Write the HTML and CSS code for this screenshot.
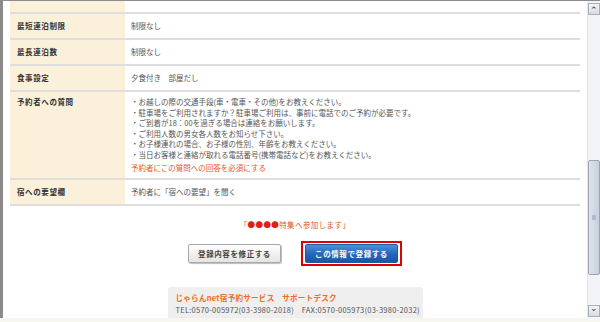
FILE: index.html
```html
<!DOCTYPE html>
<html lang="ja">
<head>
    <meta charset="UTF-8">
    <title>登録内容の確認</title>
    <link rel="stylesheet" href="styles.css">
</head>
<body>
    <div class="window">
        <div class="page">
            <div class="content">
                <table class="info">
                    <tr class="cut">
                        <th>最低連泊日数</th>
                        <td></td>
                    </tr>
                    <tr>
                        <th>最短連泊制限</th>
                        <td>制限なし</td>
                    </tr>
                    <tr>
                        <th>最長連泊数</th>
                        <td>制限なし</td>
                    </tr>
                    <tr>
                        <th>食事設定</th>
                        <td>夕食付き　部屋だし</td>
                    </tr>
                    <tr class="question">
                        <th>予約者への質問</th>
                        <td>
                            <p>・お越しの際の交通手段(車・電車・その他)をお教えください。</p>
                            <p>・駐車場をご利用されますか？駐車場ご利用は、事前に電話でのご予約が必要です。</p>
                            <p>・ご到着が18：00を過ぎる場合は連絡をお願いします。</p>
                            <p>・ご利用人数の男女各人数をお知らせ下さい。</p>
                            <p>・お子様連れの場合、お子様の性別、年齢をお教えください。</p>
                            <p>・当日お客様と連絡が取れる電話番号(携帯電話など)をお教えください。</p>
                            <p class="required">予約者にこの質問への回答を必須にする</p>
                        </td>
                    </tr>
                    <tr>
                        <th>宿への要望欄</th>
                        <td>予約者に「宿への要望」を聞く</td>
                    </tr>
                </table>

                <p class="campaign">「<span class="dot">●</span><span class="dot">●</span><span class="dot">●</span><span class="dot">●</span>特集へ参加します」</p>

                <div class="actions">
                    <button class="btn btn-back">登録内容を修正する</button>
                    <span class="focus">
                        <button class="btn btn-submit">この情報で登録する</button>
                    </span>
                </div>

                <div class="support">
                    <h2>じゃらんnet宿予約サービス　サポートデスク</h2>
                    <p>TEL:0570-005972(03-3980-2018)　FAX:0570-005973(03-3980-2032)</p>
                    <p>受付時間：年中無休　午前9時～午後6時(平日)</p>
                </div>
            </div>
        </div>
        <div class="scrollbar">
            <div class="arrow">&#8963;</div>
            <div class="track">
                <div class="thumb"><span class="grip"></span></div>
            </div>
            <div class="arrow">&#8964;</div>
        </div>
    </div>
    <div class="statusbar"></div>
</body>
</html>
```

FILE: styles.css
```css
    html, body {
        margin: 0;
        height: 100%;
        overflow: hidden;
    }

    body {
        font-family: "Noto Sans CJK JP", "Liberation Sans", sans-serif;
        font-size: 7.5px;
        color: #444;
        background-color: #fff;
        display: flex;
        flex-direction: column;
    }

    .window {
        flex: 1;
        display: flex;
        min-height: 0;
        border-top: 1px solid #8c8c8c;
    }

    .page {
        flex: 1;
        border-left: 3px solid #8a8a8a;
        overflow: hidden;
    }

    .content {
        width: 570px;
        margin: -13px 0 0 7px;
    }

    .info {
        width: 100%;
        border-collapse: collapse;
    }

    .info th,
    .info td {
        height: 24px;
        padding: 0 6px;
        border-bottom: 2px solid #dedede;
        text-align: left;
        vertical-align: middle;
        line-height: 10px;
    }

    .info th {
        width: 102px;
        padding-left: 7px;
        background-color: #fbf1da;
        color: #333;
        font-weight: bold;
        letter-spacing: 0.6px;
    }

    .info td {
        color: #555;
    }

    .info .cut th,
    .info .cut td {
        height: 21px;
        padding-top: 3px;
        vertical-align: top;
    }

    .question th,
    .question td {
        height: auto;
        vertical-align: top;
        padding-top: 5px;
        padding-bottom: 4px;
    }

    .question p {
        margin: 0;
        line-height: 10.5px;
        white-space: nowrap;
    }

    .question .required {
        margin-top: 3px;
        color: #e8561e;
    }

    .campaign {
        margin: 14px 0 0;
        text-align: center;
        color: #e8561e;
        line-height: 10px;
        letter-spacing: 0.4px;
    }

    .dot {
        color: #e02010;
    }

    .actions {
        display: flex;
        justify-content: center;
        align-items: center;
        gap: 20px;
        margin-top: 11px;
    }

    .btn {
        font-family: inherit;
        font-size: 7.5px;
        font-weight: bold;
        letter-spacing: 0.6px;
        height: 19px;
        width: 93px;
        padding: 0;
        border-radius: 2px;
        cursor: pointer;
    }

    .btn-back {
        color: #444;
        border: 1px solid #a8a8a8;
        background: linear-gradient(#ffffff, #e4e4e4);
        box-shadow: 1px 1px 1px #bdbdbd;
    }

    .focus {
        display: inline-flex;
        padding: 1px 2px;
        border: 2px solid #e00000;
    }

    .btn-submit {
        color: #fff;
        border: 1px solid #1c5aa6;
        background: linear-gradient(#4a8fdb, #2466b9 55%, #1a56a4);
    }

    .support {
        width: 239px;
        margin: 21px auto 0;
        padding: 6px 8px 2px;
        background-color: #efefef;
        border-radius: 3px;
    }

    .support h2 {
        margin: 0;
        font-size: 7.5px;
        font-weight: bold;
        color: #f26a1c;
        line-height: 10px;
        letter-spacing: 0.3px;
    }

    .support p {
        margin: 2px 0 0;
        font-size: 7.5px;
        color: #555;
        line-height: 10px;
        letter-spacing: 0.25px;
        white-space: nowrap;
    }

    .scrollbar {
        width: 12px;
        display: flex;
        flex-direction: column;
        background-color: #f3f4f8;
        border-left: 1px solid #e4e6ec;
    }

    .arrow {
        height: 10px;
        margin: 2px 0 0;
        background: linear-gradient(#f4f5f8, #d7dae2);
        border: 1px solid #a9aeb9;
        font-size: 9px;
        line-height: 12px;
        text-align: center;
        color: #333;
    }

    .arrow:last-child {
        margin: 0 0 1px;
        line-height: 4px;
    }

    .track {
        flex: 1;
        display: flex;
        flex-direction: column;
        padding-top: 145px;
    }

    .thumb {
        height: 113px;
        background: linear-gradient(90deg, #dfe3ec, #c8cfdc);
        border: 1px solid #9ca5b6;
        border-radius: 2px;
        display: flex;
        justify-content: center;
        align-items: center;
    }

    .grip {
        width: 4px;
        height: 5px;
        background-color: #b3bac8;
    }

    .statusbar {
        height: 4px;
        background-color: #f7f6ee;
    }
```
